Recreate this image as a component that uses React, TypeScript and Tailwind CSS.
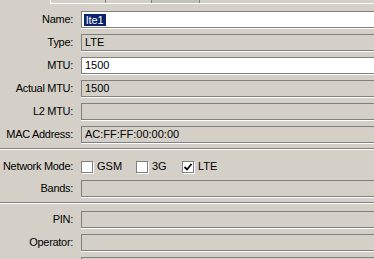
import React from 'react';

function Field({ value, white, selected }: { value?: string; white?: boolean; selected?: boolean }) {
    return (
        <div
            className={`h-[17px] w-[300px] border border-[#808080] shadow-[0_1px_0_#ffffff] flex items-center pl-[2px] leading-[15px] ${white ? 'bg-white' : 'bg-[#d4d0c8]'}`}
        >
            {selected ? (
                <span className="bg-[#0a246a] text-white px-[2px] leading-[12px] h-[12px]">{value}</span>
            ) : (
                <span className="pl-[1px]">{value}</span>
            )}
        </div>
    );
}

function Row({ label, children }: { label: string; children: React.ReactNode }) {
    return (
        <div className="flex items-center h-[17px]">
            <div className="w-[73px] shrink-0 text-right whitespace-nowrap tracking-[-0.3px]">{label}</div>
            <div className="ml-[8px]">{children}</div>
        </div>
    );
}

function Check({ label, checked, width }: { label: string; checked?: boolean; width: string }) {
    return (
        <div className={`flex items-center ${width}`}>
            <div className="w-[12px] h-[12px] bg-white border border-[#808080] shadow-[1px_1px_0_#ffffff] flex items-center justify-center">
                {checked && (
                    <svg width="10" height="10" viewBox="0 0 10 10">
                        <path d="M1.5 5 L4 7.5 L8.5 2" fill="none" stroke="#000" strokeWidth="1.8" />
                    </svg>
                )}
            </div>
            <span className="ml-[4px]">{label}</span>
        </div>
    );
}

function Separator() {
    return (
        <div>
            <div className="h-px bg-[#808080]" />
            <div className="h-px bg-white" />
        </div>
    );
}

export default function App() {
    return (
        <div className="w-[374px] h-[259px] overflow-hidden bg-[#d4d0c8] text-black text-[11px] font-['Liberation_Sans',Arial,sans-serif]">
            {/* tab strip remains */}
            <div className="flex h-[3px]">
                <div className="w-[50px]" />
                <div className="w-[56px] border-l border-white border-r border-r-[#808080]" />
                <div className="w-[46px] border-r border-[#808080]" />
                <div className="w-[48px] bg-[#c4c1b9] border-r border-[#808080]" />
            </div>
            <div className="h-px bg-white ml-[50px]" />

            <div className="pt-[7px] flex flex-col gap-[6px]">
                <Row label="Name:"><Field value="lte1" white selected /></Row>
                <Row label="Type:"><Field value="LTE" /></Row>
                <Row label="MTU:"><Field value="1500" white /></Row>
                <Row label="Actual MTU:"><Field value="1500" /></Row>
                <Row label="L2 MTU:"><Field /></Row>
                <Row label="MAC Address:"><Field value="AC:FF:FF:00:00:00" /></Row>
            </div>

            <div className="mt-[5px]">
                <Separator />
            </div>

            <div className="mt-[10px] flex items-center h-[13px]">
                <div className="w-[73px] shrink-0 text-right whitespace-nowrap tracking-[-0.3px]">Network Mode:</div>
                <div className="ml-[8px] flex items-center">
                    <Check label="GSM" width="w-[55px]" />
                    <Check label="3G" width="w-[46px]" />
                    <Check label="LTE" checked width="w-[50px]" />
                </div>
            </div>

            <div className="mt-[7px]">
                <Row label="Bands:"><Field /></Row>
            </div>

            <div className="mt-[5px]">
                <Separator />
            </div>

            <div className="pt-[7px] flex flex-col gap-[6px]">
                <Row label="PIN:"><Field /></Row>
                <Row label="Operator:"><Field /></Row>
                <Row label=""><Field /></Row>
            </div>
        </div>
    );
}
